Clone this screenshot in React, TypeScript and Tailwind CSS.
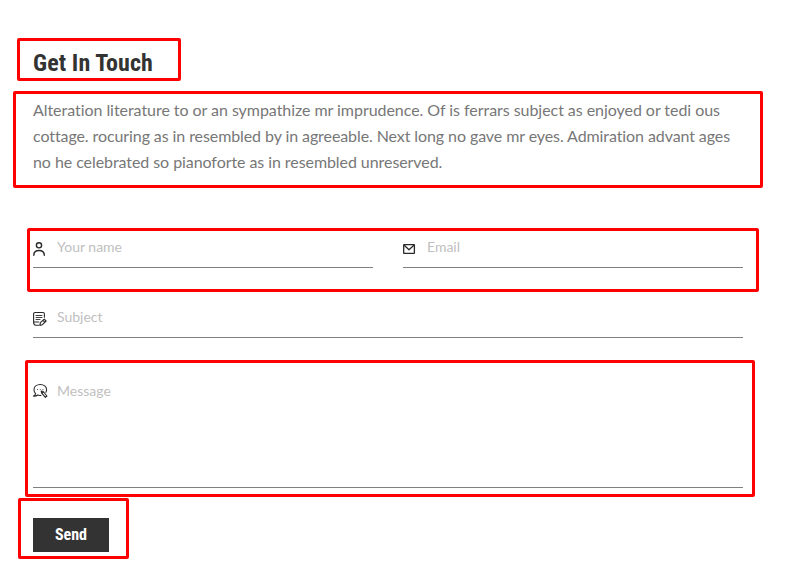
import type { ReactNode } from "react";

const marks = [
  "left-[17px] top-[38px] w-[164px] h-[43px]",
  "left-[13px] top-[91px] w-[750px] h-[97px]",
  "left-[27px] top-[228px] w-[732px] h-[64px]",
  "left-[25px] top-[360px] w-[730px] h-[137px]",
  "left-[18px] top-[498px] w-[111px] h-[61px]",
];

const iconProps = {
  fill: "none",
  stroke: "#292929",
  strokeLinecap: "round" as const,
  strokeLinejoin: "round" as const,
};

function UserIcon() {
  return (
    <svg {...iconProps} width="14" height="16" viewBox="0 0 14 16" strokeWidth="1.4">
      <circle cx="6" cy="4.3" r="2.6" />
      <path d="M.8 14.3C.8 11.2 3 9.5 6 9.5s5.3 1.7 5.3 4.8" />
    </svg>
  );
}

function MailIcon() {
  return (
    <svg {...iconProps} width="14" height="16" viewBox="0 0 14 16" strokeWidth="1.3">
      <rect x=".7" y="3.6" width="10.7" height="8.8" rx=".5" />
      <path d="M1.2 4.2 6 8.7l4.9-4.5" />
    </svg>
  );
}

function NoteIcon() {
  return (
    <svg {...iconProps} width="14" height="16" viewBox="0 0 14 16" strokeWidth="1.1">
      <path d="M11.4 6.2V3c0-1-.5-1.5-1.5-1.5H2.1C1.1 1.5.6 2 .6 3v8h5.2M.6 11c0 2 .7 3.2 2.1 3.2h2.8" />
      <path d="M3 4.5h6M3 6.5h6M3 8.5h4" strokeWidth=".9" />
      <path d="m6.8 14.4.6-2.7 3.8-3.6 1.9 1.9-3.7 3.7-2.6.7ZM10 9.3l1.8 1.8" />
    </svg>
  );
}

function MessageIcon() {
  return (
    <svg {...iconProps} width="15" height="16" viewBox="0 0 15 16" strokeWidth="1.1">
      <path d="M12.9 9.3c.5-.9.7-1.7.7-2.6 0-3.1-2.8-5.2-6.3-5.2S1 3.6 1 6.7c0 1.6.5 2.9 1.6 4-.2 1-.8 1.8-2 2.4 1.7.2 3-.2 4-1.1 1 .4 1.8.5 3.3.4" />
      <path d="m8.2 8 2 .5 3.7 4.5-1.5 1.3-3.7-4.2L8.2 8ZM9.2 10l1.3-1.1" />
      <path d="M4.5 6.5h.1M7.2 6.5h.1M9.9 6.5h.1" strokeWidth=".8" />
    </svg>
  );
}

function Field({ icon, label }: { icon: ReactNode; label: string }) {
  return (
    <label className="flex h-10 min-w-0 flex-1 border-b border-[#808080]">
      <span className="mt-[13px] w-6 shrink-0">{icon}</span>
      <input
        placeholder={label}
        className="h-9 min-w-0 flex-1 bg-transparent text-[14px] text-[#777] outline-none placeholder:text-[#bfbfbf]"
      />
    </label>
  );
}

export default function App() {
  return (
    <main className="relative h-[577px] w-[800px] overflow-hidden bg-white pl-[33px] pt-[47px] font-['Lato',sans-serif] [font-variant-ligatures:none]">
      <h2 className="flex h-8 items-center whitespace-nowrap font-['Roboto_Condensed','Roboto',sans-serif] text-[24px] font-bold tracking-[0.1px] text-[#333]">
        Get In Touch
      </h2>
      <p className="mt-[18px] h-[78px] whitespace-nowrap text-[16px] leading-[26px] text-[#777]">
        <span className="block tracking-[-0.05px]">Alteration literature to or an sympathize mr imprudence. Of is ferrars subject as enjoyed or tedi ous</span>
        <span className="block tracking-[-0.09px]">cottage. rocuring as in resembled by in agreeable. Next long no gave mr eyes. Admiration advant ages</span>
        <span className="block tracking-[-0.07px]">no he celebrated so pianoforte as in resembled unreserved.</span>
      </p>
      <form className="mt-[53px] w-[710px]">
        <div className="flex gap-[30px]">
          <Field icon={<UserIcon />} label="Your name" />
          <Field icon={<MailIcon />} label="Email" />
        </div>
        <div className="mt-[30px] flex">
          <Field icon={<NoteIcon />} label="Subject" />
        </div>
        <label className="mt-[30px] flex h-[120px] border-b border-[#808080]">
          <span className="mt-[15px] w-6 shrink-0">
            <MessageIcon />
          </span>
          <textarea
            placeholder="Message"
            className="mt-[13px] h-[100px] flex-1 resize-none bg-transparent text-[14px] leading-[20px] text-[#777] outline-none placeholder:text-[#bfbfbf]"
          />
        </label>
        <button
          type="button"
          className="mt-[30px] flex h-[34px] w-[76px] items-center justify-center bg-[#333] font-['Roboto_Condensed','Roboto',sans-serif] text-[16px] font-bold text-white"
        >
          Send
        </button>
      </form>
      {marks.map((mark) => (
        <div key={mark} className={`pointer-events-none absolute rounded-[2px] border-[3px] border-[#ff0000] ${mark}`} />
      ))}
    </main>
  );
}
